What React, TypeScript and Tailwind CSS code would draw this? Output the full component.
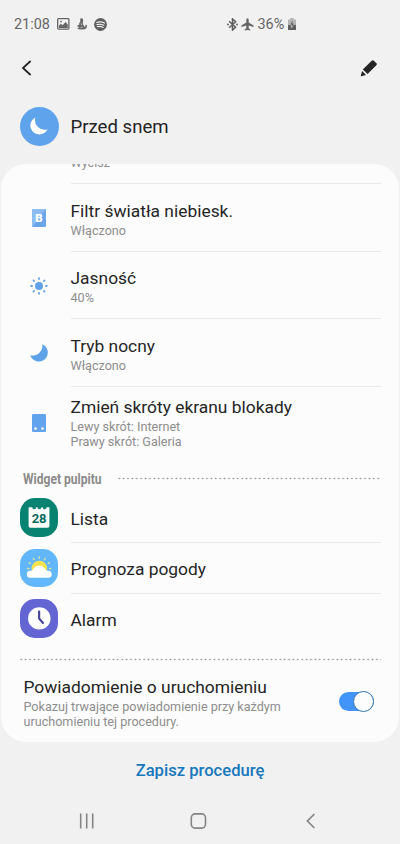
import { useState } from "react";
import type { ReactNode } from "react";

function BlueFilterIcon() {
  return (
    <svg width="14" height="18" viewBox="0 0 14 18">
      <rect width="14" height="18" rx="1.3" fill="#6aa5ea" />
      <path d="M0 18V1.3Q0 0 1.3 0H14L11 3.4H3V14.6Z" fill="#8dbcf1" />
      <path d="M3 14.6V3.4H11Z" fill="#93c0f2" />
      <text x="7" y="13" textAnchor="middle" fontSize="11.5" fontWeight="900" fill="#fff" fontFamily="Roboto, sans-serif">
        B
      </text>
    </svg>
  );
}

function BrightnessIcon() {
  const rays = [0, 45, 90, 135, 180, 225, 270, 315];
  return (
    <svg width="18" height="18" viewBox="0 0 18 18">
      <circle cx="9" cy="9" r="4" fill="#5fa2e8" />
      {rays.map((angle) => (
        <path
          key={angle}
          d="M9 1.2V2"
          stroke="#5fa2e8"
          strokeWidth="1.8"
          strokeLinecap="round"
          transform={`rotate(${angle} 9 9)`}
        />
      ))}
    </svg>
  );
}

function NightIcon() {
  return (
    <svg width="18" height="18" viewBox="0 0 18 18">
      <path d="M12.2 0.2A9 9 0 1 1 0.2 11.2A9.6 9.6 0 0 0 12.2 0.2Z" fill="#5fa2e8" />
    </svg>
  );
}

function LockScreenIcon() {
  return (
    <svg className="-mt-[2px]" width="14" height="18" viewBox="0 0 14 18">
      <rect width="14" height="18" rx="1.3" fill="#62a3ee" />
      <circle cx="3.5" cy="14.6" r="1.3" fill="#fff" />
      <circle cx="10.5" cy="14.6" r="1.3" fill="#fff" />
    </svg>
  );
}

function CalendarIcon() {
  return (
    <svg width="39" height="39" viewBox="0 0 39 39">
      <path d="M9.6 9.2 H12.2 A2 2 0 0 0 16.2 9.2 H17.4 A2 2 0 0 0 21.4 9.2 H22.6 A2 2 0 0 0 26.6 9.2 H29.4 V28 Q29.4 29.8 27.6 29.8 H10.4 Q8.6 29.8 8.6 28 V10.2 Q8.6 9.2 9.6 9.2Z" fill="#fff" />
      <text x="19.1" y="25" textAnchor="middle" fontSize="13" fontWeight="700" fill="#0b6b60" fontFamily="Roboto, sans-serif">
        28
      </text>
    </svg>
  );
}

function WeatherIcon() {
  const rays = [-90, -60, -30, 0, 30, 60, 90];
  return (
    <svg width="39" height="39" viewBox="0 0 39 39">
      <circle cx="19.3" cy="19.6" r="7.8" fill="#f5e34f" />
      {rays.map((angle) => (
        <path
          key={angle}
          d="M19.3 8V9.2"
          stroke="#cfe0a8"
          strokeWidth="1.6"
          strokeLinecap="round"
          transform={`rotate(${angle} 19.3 19.6)`}
        />
      ))}
      <path d="M10.3 28.8 A3.5 3.5 0 0 1 10.3 21.8 Q12.4 21.8 13.2 20.2 A7 7 0 0 1 25.4 20.6 Q26.2 21.8 28.2 21.8 A3.5 3.5 0 0 1 28.2 28.8Z" fill="#fff" />
    </svg>
  );
}

function ClockIcon() {
  return (
    <svg width="39" height="39" viewBox="0 0 39 39">
      <circle cx="19.3" cy="19.4" r="11.2" fill="#fff" />
      <path d="M19.1 12.6V19.6L23 24" fill="none" stroke="#4a489c" strokeWidth="2.2" strokeLinecap="round" strokeLinejoin="round" />
    </svg>
  );
}

const actions = [
  { icon: <BlueFilterIcon />, title: "Filtr światła niebiesk.", sub: "Włączono" },
  { icon: <BrightnessIcon />, title: "Jasność", sub: "40%" },
  { icon: <NightIcon />, title: "Tryb nocny", sub: "Włączono" },
];

const widgets = [
  { icon: <CalendarIcon />, color: "bg-[#088372]", title: "Lista" },
  { icon: <WeatherIcon />, color: "bg-[#62b6fa]", title: "Prognoza pogody" },
  { icon: <ClockIcon />, color: "bg-[#6265d2]", title: "Alarm" },
];

function Dots({ className }: { className: string }) {
  return (
    <div
      className={`h-[3px] bg-[radial-gradient(circle,#8f8f8f_0.6px,transparent_1.1px)] bg-[length:4.4px_3px] ${className}`}
    ></div>
  );
}

function IconCell({ children }: { children: ReactNode }) {
  return <div className="flex w-[70px] shrink-0 items-center justify-center pr-[2px] pl-[8px]">{children}</div>;
}

function StatusBar() {
  return (
    <div className="flex h-12 items-center text-[#666]">
      <span className="ml-[14px] w-[43px] pt-px text-[14.4px]">21:08</span>
      <svg width="13" height="12" viewBox="0 0 13 12">
        <rect x="0.7" y="0.7" width="11.2" height="10.4" rx="0.8" fill="none" stroke="#666" strokeWidth="1.3" />
        <path d="M2 9.9V7.4L4 5.8L5.6 7.2L8.5 4L10.8 6.4V9.9Z" fill="#666" />
        <circle cx="4" cy="3.6" r="0.9" fill="#666" />
      </svg>
      <svg className="ml-[6px]" width="12" height="12" viewBox="0 0 12 12">
        <path d="M4.3 0.6Q6.2 -0.3 7 1.3Q7.4 2.6 6.8 4.2L7 6.4Q8.2 7.2 8 8.8L9.5 8.2L9.4 6.6L11.2 7.6L10.4 10.2Q8.6 11.7 6 11.5Q2.8 11.8 1 10L3.4 9.6Q1.2 8.8 1.2 7.3L3.5 6.8Q2.3 5.8 4.2 3.9Z" fill="#666" />
        <path d="M5 5.4L5.6 7.2M4.6 9.7L6.7 9.1" stroke="#f1f1f1" strokeWidth="0.6" />
      </svg>
      <svg className="ml-[6px]" width="13" height="13" viewBox="0 0 13 13">
        <circle cx="6.5" cy="6.5" r="6.4" fill="#5f5f5f" />
        <path d="M2.6 4.4Q6.7 3.1 10.6 5.1M3 6.6Q6.6 5.6 9.9 7.3M3.3 8.7Q6.4 7.9 9.2 9.4" fill="none" stroke="#f1f1f1" strokeWidth="1.1" strokeLinecap="round" />
      </svg>
      <svg className="ml-[120px]" width="11" height="13" viewBox="0 0 11 13">
        <path d="M2.1 3.3L8.6 9.3L5.5 12.1V0.9L8.6 3.7L2.1 9.7" fill="none" stroke="#5f5f5f" strokeWidth="1.5" />
        <circle cx="1" cy="6.5" r="1" fill="#666" />
        <circle cx="10" cy="6.5" r="1" fill="#666" />
      </svg>
      <svg className="ml-[3px]" width="13" height="13" viewBox="0 0 13 13">
        <path d="M6.5 0.2Q7.7 0.2 7.7 1.8V4.5L12.6 7.4V8.9L7.7 7.5V10.3L9.3 11.4V12.5L6.5 11.9L3.7 12.5V11.4L5.3 10.3V7.5L0.4 8.9V7.4L5.3 4.5V1.8Q5.3 0.2 6.5 0.2Z" fill="#666" />
      </svg>
      <span className="ml-[3.5px] w-[30px] pt-px text-[14.4px]">36%</span>
      <svg width="8" height="12" viewBox="0 0 8 12">
        <path d="M0 1.6H2.3V0H5.7V1.6H8V7H0Z" fill="#b5b5b5" />
        <path d="M0 7H8V12H0Z" fill="#606060" />
        <path d="M4.8 2.4L2.1 6.8H3.8L3.2 9.9L6 5.7H4.3Z" fill="#606060" />
        <path d="M2.1 7.2H3.8L3.2 9.9L5.6 7" fill="none" stroke="#c9c9c9" strokeWidth="0.7" />
      </svg>
    </div>
  );
}

export default function App() {
  const [notify, setNotify] = useState(true);

  return (
    <div className="flex h-[844px] w-[400px] flex-col overflow-hidden bg-[#f1f1f1] font-['Roboto',sans-serif] text-[#252525]">
      <StatusBar />

      <header className="flex h-10 items-center justify-between pr-[22px] pl-[21px]">
        <button type="button" aria-label="Wstecz">
          <svg width="12" height="16" viewBox="0 0 12 16">
            <path d="M9.6 1L2 8L9.6 15" fill="none" stroke="#252525" strokeWidth="1.8" />
          </svg>
        </button>
        <button type="button" aria-label="Edytuj">
          <svg width="18" height="18" viewBox="0 0 18 18">
            <path d="M2.8 10.5L11.7 1.7Q12.8 0.7 13.9 1.7L16.4 4.2Q17.3 5.2 16.3 6.3L7.6 15Z" fill="#252525" />
            <path d="M2.1 12.1L6 16L1.1 17.2Q0.6 17.2 0.8 16.7Z" fill="#252525" />
          </svg>
        </button>
      </header>

      <div className="flex h-[76px] items-center">
        <div className="ml-[19.5px] flex size-[39px] items-center justify-center rounded-full bg-[#5fa3ec]">
          <svg width="18" height="18" viewBox="0 0 18 18">
            <path d="M5.4 0.4A9 9 0 1 0 17.6 12.2A9.6 9.6 0 0 1 5.4 0.4Z" fill="#fff" />
          </svg>
        </div>
        <h1 className="ml-[12px] pt-[3px] text-[18.6px]">Przed snem</h1>
      </div>

      <main className="mx-px h-[578px] overflow-hidden rounded-[25px] bg-[#fcfcfc] pr-[18px]">
        <div className="ml-[69.5px] flex h-5 flex-col justify-end border-b border-[#e9e9e9]">
          <span className="mb-[13px] text-[12.6px] leading-[15px] text-[#8d8d8d]">Wycisz</span>
        </div>

        {actions.map((item, i) => (
          <div key={i} className="flex h-[67.7px]">
            <IconCell>{item.icon}</IconCell>
            <div className="-ml-[0.5px] flex-1 border-b border-[#e9e9e9] pt-[14.6px]">
              <div className="text-[17.4px] leading-6">{item.title}</div>
              <div className="text-[12.6px] leading-[15px] text-[#8d8d8d]">{item.sub}</div>
            </div>
          </div>
        ))}

        <div className="flex h-[73px]">
          <IconCell>
            <LockScreenIcon />
          </IconCell>
          <div className="-ml-[0.5px] flex-1 pt-[8px]">
            <div className="text-[17.4px] leading-6">Zmień skróty ekranu blokady</div>
            <div className="text-[12.6px] leading-[15px] text-[#8d8d8d]">Lewy skrót: Internet</div>
            <div className="text-[12.6px] leading-[15px] text-[#8d8d8d]">Prawy skrót: Galeria</div>
          </div>
        </div>

        <div className="flex h-[38px] items-center pl-[22px]">
          <h2 className="w-[94px] origin-left scale-x-[0.875] font-['Roboto',sans-serif] text-[13.8px] font-bold whitespace-nowrap text-[#8b8b8b]">
            Widget pulpitu
          </h2>
          <Dots className="-mt-[2px] flex-1" />
        </div>

        {widgets.map((item, i) => (
          <div key={i} className="flex h-[50.7px] items-start">
            <div className={`ml-[18.5px] size-[38.5px] shrink-0 rounded-[15px] ${item.color}`}>{item.icon}</div>
            <div
              className={`ml-[12.5px] h-[45px] flex-1 pt-[8.6px] text-[17.4px] leading-6 ${
                i < widgets.length - 1 ? "border-b border-[#e9e9e9]" : ""
              }`}
            >
              {item.title}
            </div>
          </div>
        ))}

        <Dots className="mt-[8px] ml-[18px]" />

        <div className="flex items-start justify-between pt-[14px] pl-[22.5px]">
          <div>
            <div className="text-[17.4px] leading-6">Powiadomienie o uruchomieniu</div>
            <div className="w-[270px] text-[12.6px] leading-[15px] text-[#8d8d8d]">
              Pokazuj trwające powiadomienie przy każdym
              <br />
              uruchomieniu tej procedury.
            </div>
          </div>
          <button
            type="button"
            role="switch"
            aria-checked={notify}
            aria-label="Powiadomienie o uruchomieniu"
            onClick={() => setNotify(!notify)}
            className={`mt-[17px] mr-[7px] flex h-[19px] w-[35px] items-center rounded-full ${
              notify ? "justify-end bg-[#4294fb]" : "justify-start bg-[#c4c4c4]"
            }`}
          >
            <span className="size-[21px] shrink-0 rounded-full border border-[#3377b0] bg-[#fdfdfd]"></span>
          </button>
        </div>
      </main>

      <button type="button" className="h-[58px] pt-px text-center text-[16.6px] font-medium text-[#1777bd]">
        Zapisz procedurę
      </button>

      <nav className="flex h-[44px] items-center pb-[2px]">
        <svg className="ml-[79px]" width="16" height="16" viewBox="0 0 16 16">
          <path d="M1.7 0.5V15.5M7.7 0.5V15.5M13.7 0.5V15.5" stroke="#858585" strokeWidth="1.6" />
        </svg>
        <svg className="ml-[95px]" width="17" height="16" viewBox="0 0 17 16">
          <rect x="1.3" y="0.9" width="14.2" height="14.2" rx="3.8" fill="none" stroke="#858585" strokeWidth="1.6" />
        </svg>
        <svg className="ml-[98px]" width="11" height="16" viewBox="0 0 11 16">
          <path d="M9.4 1L2.4 8L9.4 15" fill="none" stroke="#858585" strokeWidth="1.7" />
        </svg>
      </nav>
    </div>
  );
}
